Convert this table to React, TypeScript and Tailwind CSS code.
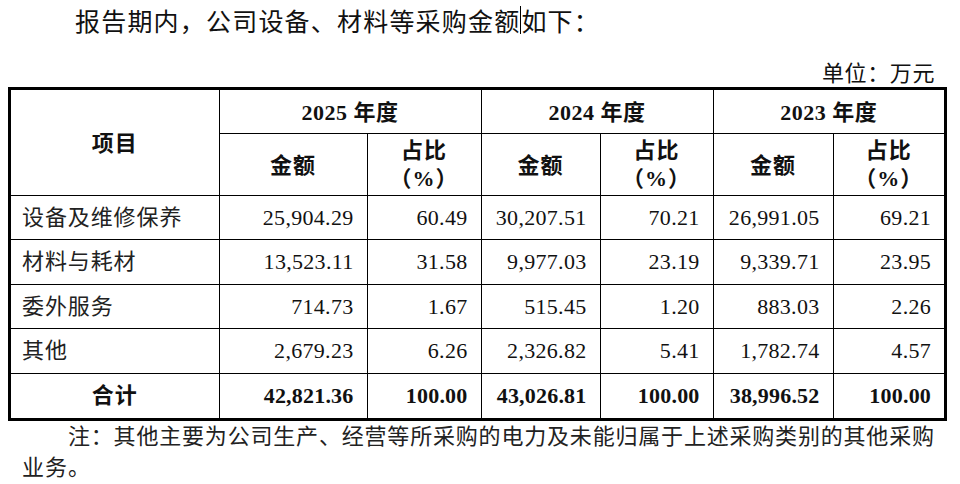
import React from 'react';

type Row = [string, string, string, string, string, string, string];

const rows: Row[] = [
  ['设备及维修保养', '25,904.29', '60.49', '30,207.51', '70.21', '26,991.05', '69.21'],
  ['材料与耗材', '13,523.11', '31.58', '9,977.03', '23.19', '9,339.71', '23.95'],
  ['委外服务', '714.73', '1.67', '515.45', '1.20', '883.03', '2.26'],
  ['其他', '2,679.23', '6.26', '2,326.82', '5.41', '1,782.74', '4.57'],
];

const total: Row = ['合计', '42,821.36', '100.00', '43,026.81', '100.00', '38,996.52', '100.00'];

const years = ['2025', '2024', '2023'];

const font = { fontFamily: '"Liberation Serif", "Noto Sans CJK SC", serif' };

export default function App() {
  return (
    <div className="w-[960px] h-[484px] bg-white text-[#111] overflow-hidden" style={font}>
      {/* intro line */}
      <div className="pt-[8px] pl-[75px] h-[60px] text-[25px] leading-[30px] tracking-[1.2px] flex items-start">
        <span>报告期内，公司设备、材料等采购金额</span>
        <span className="inline-block w-px h-[28px] bg-black mt-[-2px]" />
        <span>如下：</span>
      </div>

      <div className="w-[947px] flex justify-end pr-[12px] text-[22px] leading-[27px] tracking-[0.6px]">
        单位：万元
      </div>

      <div className="ml-[8px] w-[939px] border-[3px] border-black">
        <table className="w-[933px] table-fixed border-collapse border-hidden">
          <colgroup>
            <col className="w-[208px]" />
            <col className="w-[148px]" />
            <col className="w-[114px]" />
            <col className="w-[119px]" />
            <col className="w-[113px]" />
            <col className="w-[120px]" />
            <col className="w-[111px]" />
          </colgroup>
          <thead>
            <tr className="h-[43px]">
              <th
                rowSpan={2}
                className="border border-black text-[22px] font-bold tracking-[1px] pt-[2px]"
              >
                项目
              </th>
              {years.map((y) => (
                <th
                  key={y}
                  colSpan={2}
                  className="border border-black text-[22px] font-bold tracking-[0.5px] pt-[2px]"
                >
                  {y} 年度
                </th>
              ))}
            </tr>
            <tr className="h-[62px]">
              {years.map((y) => (
                <React.Fragment key={y}>
                  <th className="border border-black text-[22px] font-bold tracking-[1px] pt-[2px]">
                    金额
                  </th>
                  <th className="border border-black text-[22px] font-bold leading-[28px] tracking-[1px] pt-[2px]">
                    <div>占比</div>
                    <div>（%）</div>
                  </th>
                </React.Fragment>
              ))}
            </tr>
          </thead>
          <tbody>
            {rows.map((r, i) => (
              <tr key={r[0]} className={i % 2 === 0 ? 'h-[44px]' : 'h-[45px]'}>
                <td className="border border-black pl-[11px] text-[22px] tracking-[0.9px] text-[#222]">
                  {r[0]}
                </td>
                {r.slice(1).map((v, j) => (
                  <td
                    key={j}
                    className="border border-black pr-[13px] text-right text-[22px] tracking-[0.3px]"
                  >
                    {v}
                  </td>
                ))}
              </tr>
            ))}
            <tr className="h-[45px]">
              <td className="border border-black text-center text-[22px] font-bold tracking-[1px]">
                {total[0]}
              </td>
              {total.slice(1).map((v, j) => (
                <td
                  key={j}
                  className="border border-black pr-[13px] text-right text-[22px] font-bold tracking-[0.2px]"
                >
                  {v}
                </td>
              ))}
            </tr>
          </tbody>
        </table>
      </div>

      {/* footnote */}
      <div className="pl-[22px] w-[934px] text-[22px] leading-[31px] text-[#222]">
        <div className="pl-[46px] text-justify [text-align-last:justify]">
          注：其他主要为公司生产、经营等所采购的电力及未能归属于上述采购类别的其他采购
        </div>
        <div className="tracking-[1px]">业务。</div>
      </div>
    </div>
  );
}
